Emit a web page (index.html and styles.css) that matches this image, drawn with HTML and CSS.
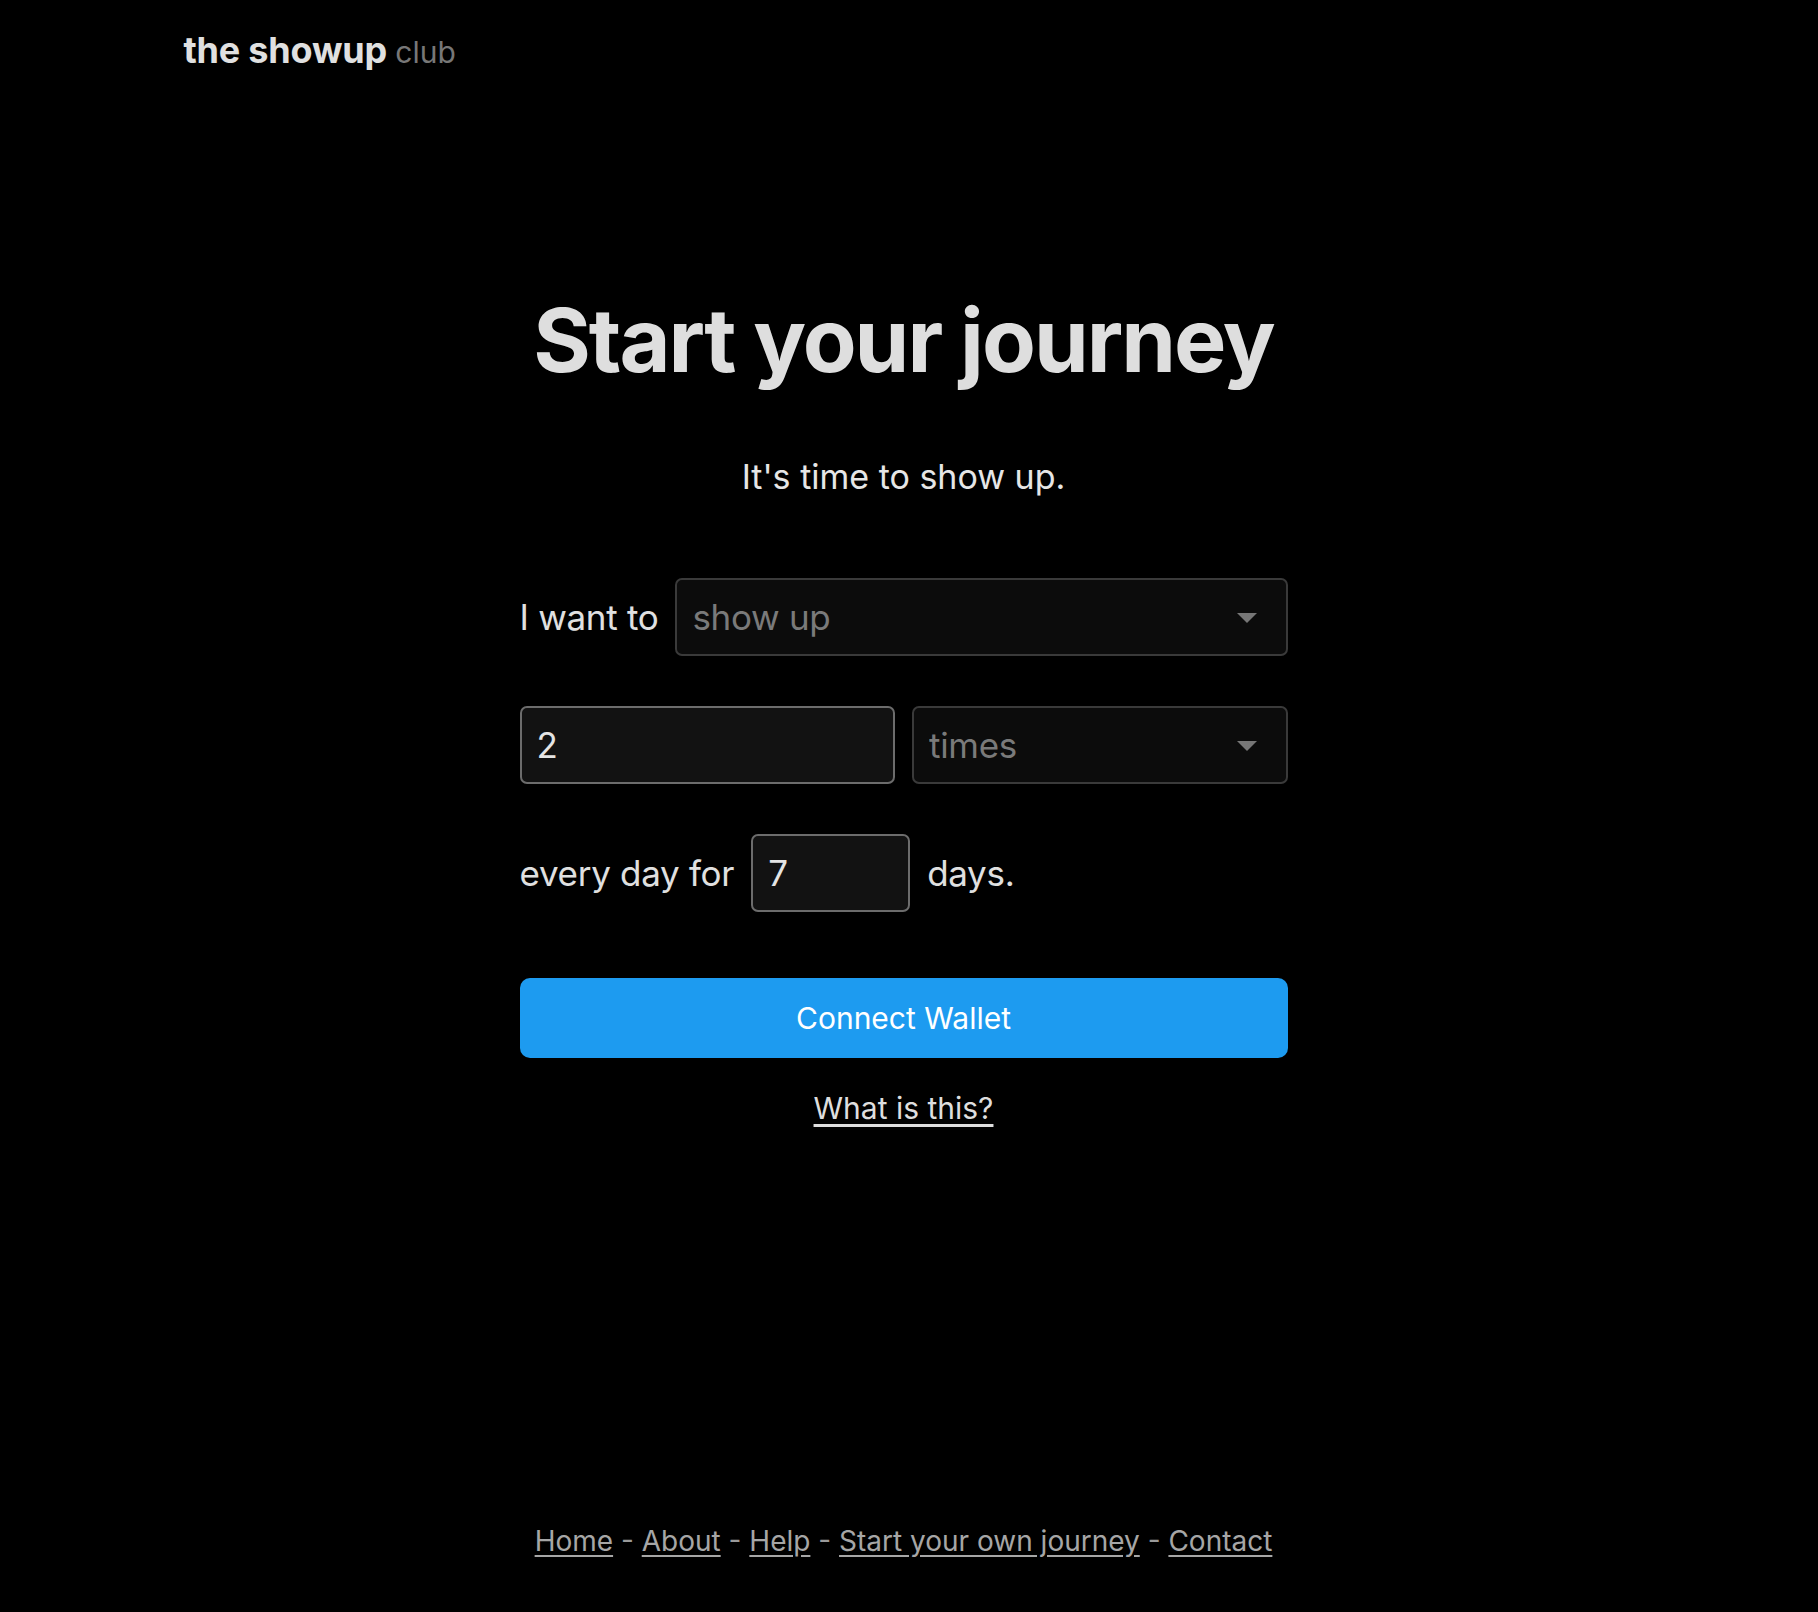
FILE: index.html
```html
<!DOCTYPE html>
<html lang="en">
<head>
  <meta charset="UTF-8" />
  <meta name="viewport" content="width=device-width, initial-scale=1.0"/>
  <title>Start your journey - the showup club</title>
  <link rel="stylesheet" href="styles.css">
</head>
<body>
  <div class="page">
    <header class="site-header">
      <a href="#" class="logo">the showup <span class="logo-club">club</span></a>
    </header>

    <main class="journey">
      <h1>Start your journey</h1>
      <p class="tagline">It's time to show up.</p>

      <form class="journey-form">
        <div class="form-row">
          <label for="activity">I want to</label>
          <div class="select-wrap">
            <select id="activity" name="activity">
              <option>show up</option>
            </select>
          </div>
        </div>

        <div class="form-row split">
          <input type="text" inputmode="numeric" id="count" name="count" value="2" />
          <div class="select-wrap">
            <select id="unit" name="unit">
              <option>times</option>
            </select>
          </div>
        </div>

        <div class="form-row">
          <label for="days">every day for</label>
          <input type="text" inputmode="numeric" id="days" name="days" value="7" class="days-input" />
          <span>days.</span>
        </div>

        <button type="button" class="connect-btn">Connect Wallet</button>
      </form>

      <a href="#" class="what-link">What is this?</a>
    </main>

    <footer class="site-footer">
      <a href="#">Home</a> - <a href="#">About</a> - <a href="#">Help</a> - <a href="#">Start your own journey</a> - <a href="#">Contact</a>
    </footer>
  </div>
</body>
</html>
```

FILE: styles.css
```css
body {
  margin: 0;
  background-color: #000;
  color: #dedede;
  font-family: Inter, "Noto Sans", Arial, sans-serif;
}
.page {
  min-height: 100vh;
  padding-right: 11px;
  display: flex;
  flex-direction: column;
  box-sizing: border-box;
}

/* Header */
.site-header {
  width: 100%;
  max-width: 1440px;
  margin: 0 auto;
  padding-top: 29px;
}
.logo {
  color: #e0e0e0;
  text-decoration: none;
  font-size: 36px;
  font-weight: bold;
  line-height: 1.2;
  letter-spacing: -0.2px;
}
.logo-club {
  color: #777;
  font-weight: normal;
  font-size: 30px;
  letter-spacing: 0;
}

/* Main */
.journey {
  width: 768px;
  margin: 0 auto;
  text-align: center;
  flex: 1;
}
.journey h1 {
  margin: 220px 0 0;
  font-size: 88px;
  line-height: 1.1;
  font-weight: bold;
  letter-spacing: -2px;
  color: #dedede;
}
.tagline {
  margin: 68px 0 0;
  font-size: 34px;
  line-height: 1.2;
  color: #e6e6e6;
}

.journey-form {
  margin-top: 80px;
  display: flex;
  flex-direction: column;
  gap: 50px;
  text-align: left;
}
.form-row {
  display: flex;
  align-items: center;
  gap: 17px;
  height: 78px;
  font-size: 35px;
  letter-spacing: -0.3px;
  color: #e0e0e0;
}
.form-row label {
  white-space: nowrap;
}
.form-row.split {
  display: grid;
  grid-template-columns: 1fr 1fr;
}

.select-wrap {
  position: relative;
  flex: 1;
  height: 100%;
}
.select-wrap::after {
  content: "";
  position: absolute;
  right: 31px;
  top: 35px;
  border-left: 10px solid transparent;
  border-right: 10px solid transparent;
  border-top: 10px solid #777;
  pointer-events: none;
}
.select-wrap select {
  appearance: none;
  -webkit-appearance: none;
  width: 100%;
  height: 100%;
  box-sizing: border-box;
  background-color: #0c0c0c;
  border: 2px solid #3a3a3a;
  border-radius: 7px;
  padding: 0 60px 0 15px;
  font-family: inherit;
  font-size: 35px;
  letter-spacing: -0.3px;
  color: #7a7a7a;
}
.form-row input {
  height: 100%;
  box-sizing: border-box;
  background-color: #121212;
  border: 2px solid #6c6c6c;
  border-radius: 7px;
  padding: 0 15px;
  font-family: inherit;
  font-size: 35px;
  color: #e4e4e4;
  min-width: 0;
}
.form-row input:focus,
.select-wrap select:focus {
  outline: none;
}
.days-input {
  width: 159px;
  flex: none;
}

.connect-btn {
  margin-top: 16px;
  height: 80px;
  width: 100%;
  background-color: #1d9bf0;
  border: none;
  border-radius: 10px;
  color: #fff;
  font-family: inherit;
  font-size: 30px;
  cursor: pointer;
}

.what-link {
  display: inline-block;
  margin-top: 32px;
  color: #dedede;
  font-size: 30px;
  text-underline-offset: 5px;
}

/* Footer */
.site-footer {
  text-align: center;
  padding-bottom: 54px;
  font-size: 28px;
  color: #9a9a9a;
}
.site-footer a {
  color: #a6a6a6;
  text-underline-offset: 4px;
}
```
